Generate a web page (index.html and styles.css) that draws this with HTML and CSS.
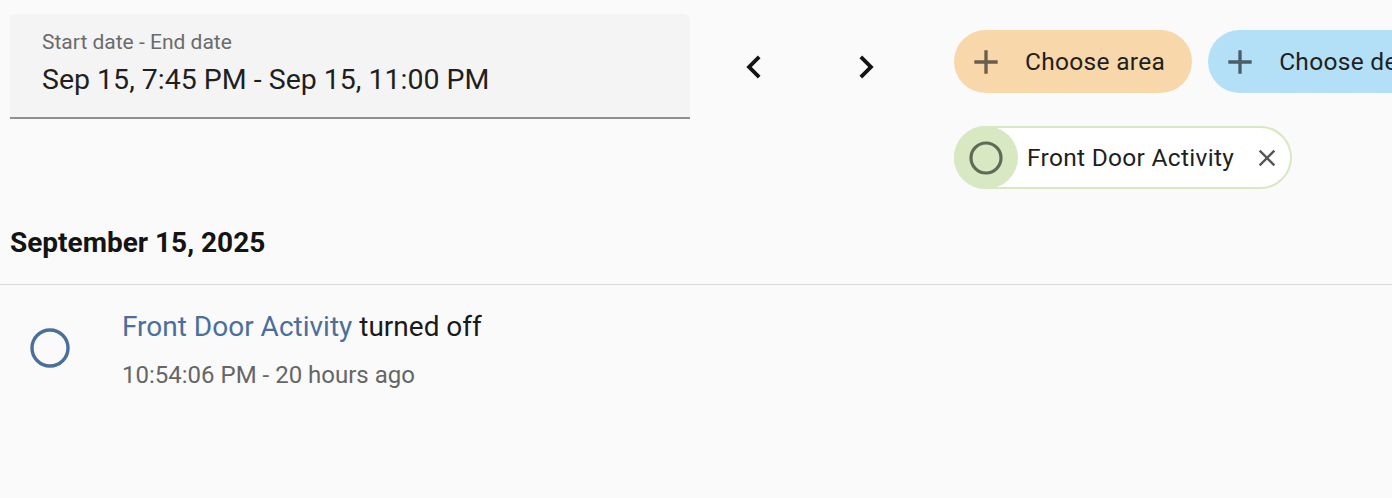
FILE: index.html
```html
<!DOCTYPE html>
<html lang="en">
<head>
    <meta charset="UTF-8">
    <meta name="viewport" content="width=device-width, initial-scale=1.0">
    <title>Logbook</title>
    <link rel="stylesheet" href="styles.css">
</head>
<body>
    <div class="filters">
        <div class="date-field">
            <label>Start date - End date</label>
            <div class="date-value">Sep 15, 7:45 PM - Sep 15, 11:00 PM</div>
        </div>

        <div class="nav">
            <button class="nav-btn">
                <svg viewBox="0 0 24 24"><path d="M15.41,16.58L10.83,12L15.41,7.41L14,6L8,12L14,18L15.41,16.58Z"/></svg>
            </button>
            <button class="nav-btn">
                <svg viewBox="0 0 24 24"><path d="M8.59,16.58L13.17,12L8.59,7.41L10,6L16,12L10,18L8.59,16.58Z"/></svg>
            </button>
        </div>

        <div class="targets">
            <div class="add-row">
                <div class="add-chip area">
                    <svg viewBox="0 0 24 24"><path d="M19,13H13V19H11V13H5V11H11V5H13V11H19V13Z"/></svg>
                    <span>Choose area</span>
                </div>
                <div class="add-chip device">
                    <svg viewBox="0 0 24 24"><path d="M19,13H13V19H11V13H5V11H11V5H13V11H19V13Z"/></svg>
                    <span>Choose device</span>
                </div>
            </div>
            <div class="selected-row">
                <div class="entity-chip">
                    <div class="chip-icon">
                        <svg viewBox="0 0 40 40"><circle cx="20" cy="20" r="15" /></svg>
                    </div>
                    <span>Front Door Activity</span>
                    <svg class="chip-close" viewBox="0 0 24 24"><path d="M19,6.41L17.59,5L12,10.59L6.41,5L5,6.41L10.59,12L5,17.59L6.41,19L12,13.41L17.59,19L19,17.59L13.41,12L19,6.41Z"/></svg>
                </div>
            </div>
        </div>
    </div>

    <h2 class="day">September 15, 2025</h2>

    <div class="entry">
        <div class="entry-icon">
            <svg viewBox="0 0 40 40"><circle cx="20" cy="20" r="18" /></svg>
        </div>
        <div class="entry-text">
            <div class="entry-msg"><a href="#">Front Door Activity</a> turned off</div>
            <div class="entry-time">10:54:06 PM - 20 hours ago</div>
        </div>
    </div>
</body>
</html>
```
FILE: styles.css
```css
body{
    margin: 0;
    background-color: #fafafa;
    font-family: Roboto, "Liberation Sans", sans-serif;
    color: #212121;
    overflow: hidden;
}

.filters{
    display: flex;
    align-items: flex-start;
    box-sizing: border-box;
    height: 206px;
    padding: 14px 0 0 10px;
}

.date-field{
    flex: none;
    width: 680px;
    height: 105px;
    box-sizing: border-box;
    padding: 16px 0 0 32px;
    background-color: #f4f4f4;
    border-bottom: 2px solid #8f8f8f;
    border-radius: 6px 6px 0 0;
}

.date-field label{
    display: block;
    font-size: 21px;
    color: #6b6b6b;
    line-height: 24px;
}

.date-value{
    font-size: 28.5px;
    line-height: 32px;
    margin-top: 10px;
    color: #1f1f1f;
}

.nav{
    flex: none;
    display: flex;
    gap: 64px;
    margin: 29px 64px 0 40px;
}

.nav-btn{
    width: 48px;
    height: 48px;
    padding: 0;
    border: none;
    background: none;
    display: flex;
    align-items: center;
    justify-content: center;
}

.nav-btn svg{
    width: 46px;
    height: 46px;
    fill: #141414;
}

.targets{
    display: flex;
    flex-direction: column;
    gap: 33px;
    padding-top: 16px;
}

.add-row{
    display: flex;
    gap: 16px;
    white-space: nowrap;
}

.add-chip{
    flex: none;
    display: flex;
    align-items: center;
    height: 63px;
    padding: 0 27px 0 12px;
    border-radius: 32px;
    font-size: 24.5px;
    letter-spacing: 0.3px;
    color: #1f1f1f;
}

.add-chip svg{
    width: 40px;
    height: 40px;
    margin-right: 19px;
}

.add-chip.area{
    background-color: #f8d7aa;
}

.add-chip.area svg{
    fill: #6b5e4c;
}

.add-chip.device{
    background-color: #b4e0f7;
}

.add-chip.device svg{
    fill: #4a5e69;
}

.selected-row{
    display: flex;
}

.entity-chip{
    display: flex;
    align-items: center;
    height: 63px;
    box-sizing: border-box;
    border: 2px solid #d7e8c2;
    border-radius: 32px;
    background-color: #ffffff;
    padding-right: 9px;
    font-size: 24.5px;
    letter-spacing: 0.3px;
    color: #1f1f1f;
}

.chip-icon{
    width: 64px;
    height: 63px;
    margin: -2px 9px -2px -2px;
    border-radius: 50%;
    background-color: #d7e8c2;
    display: flex;
    align-items: center;
    justify-content: center;
}

.chip-icon svg{
    width: 40px;
    height: 40px;
    fill: none;
    stroke: #5f6a57;
    stroke-width: 3.2px;
}

.chip-close{
    width: 28px;
    height: 28px;
    margin-left: 19px;
    fill: #555555;
}

.day{
    margin: 0;
    padding: 20px 10px 0;
    font-size: 28px;
    font-weight: 700;
    line-height: 34px;
    height: 79px;
    color: #141414;
    border-bottom: 1px solid #dcdcdc;
    box-sizing: border-box;
}

.entry{
    display: flex;
    align-items: flex-start;
    padding: 24px 0 0 30px;
}

.entry-icon{
    margin-top: 19px;
    width: 40px;
    height: 40px;
}

.entry-icon svg{
    width: 40px;
    height: 40px;
    fill: none;
    stroke: #4a6f9b;
    stroke-width: 3.4px;
}

.entry-text{
    margin-left: 52px;
}

.entry-msg{
    font-size: 28px;
    line-height: 36px;
    color: #1a1a1a;
}

.entry-msg a{
    color: #4a6f9b;
    text-decoration: none;
}

.entry-time{
    margin-top: 16px;
    font-size: 24px;
    line-height: 28px;
    color: #666666;
}
```
